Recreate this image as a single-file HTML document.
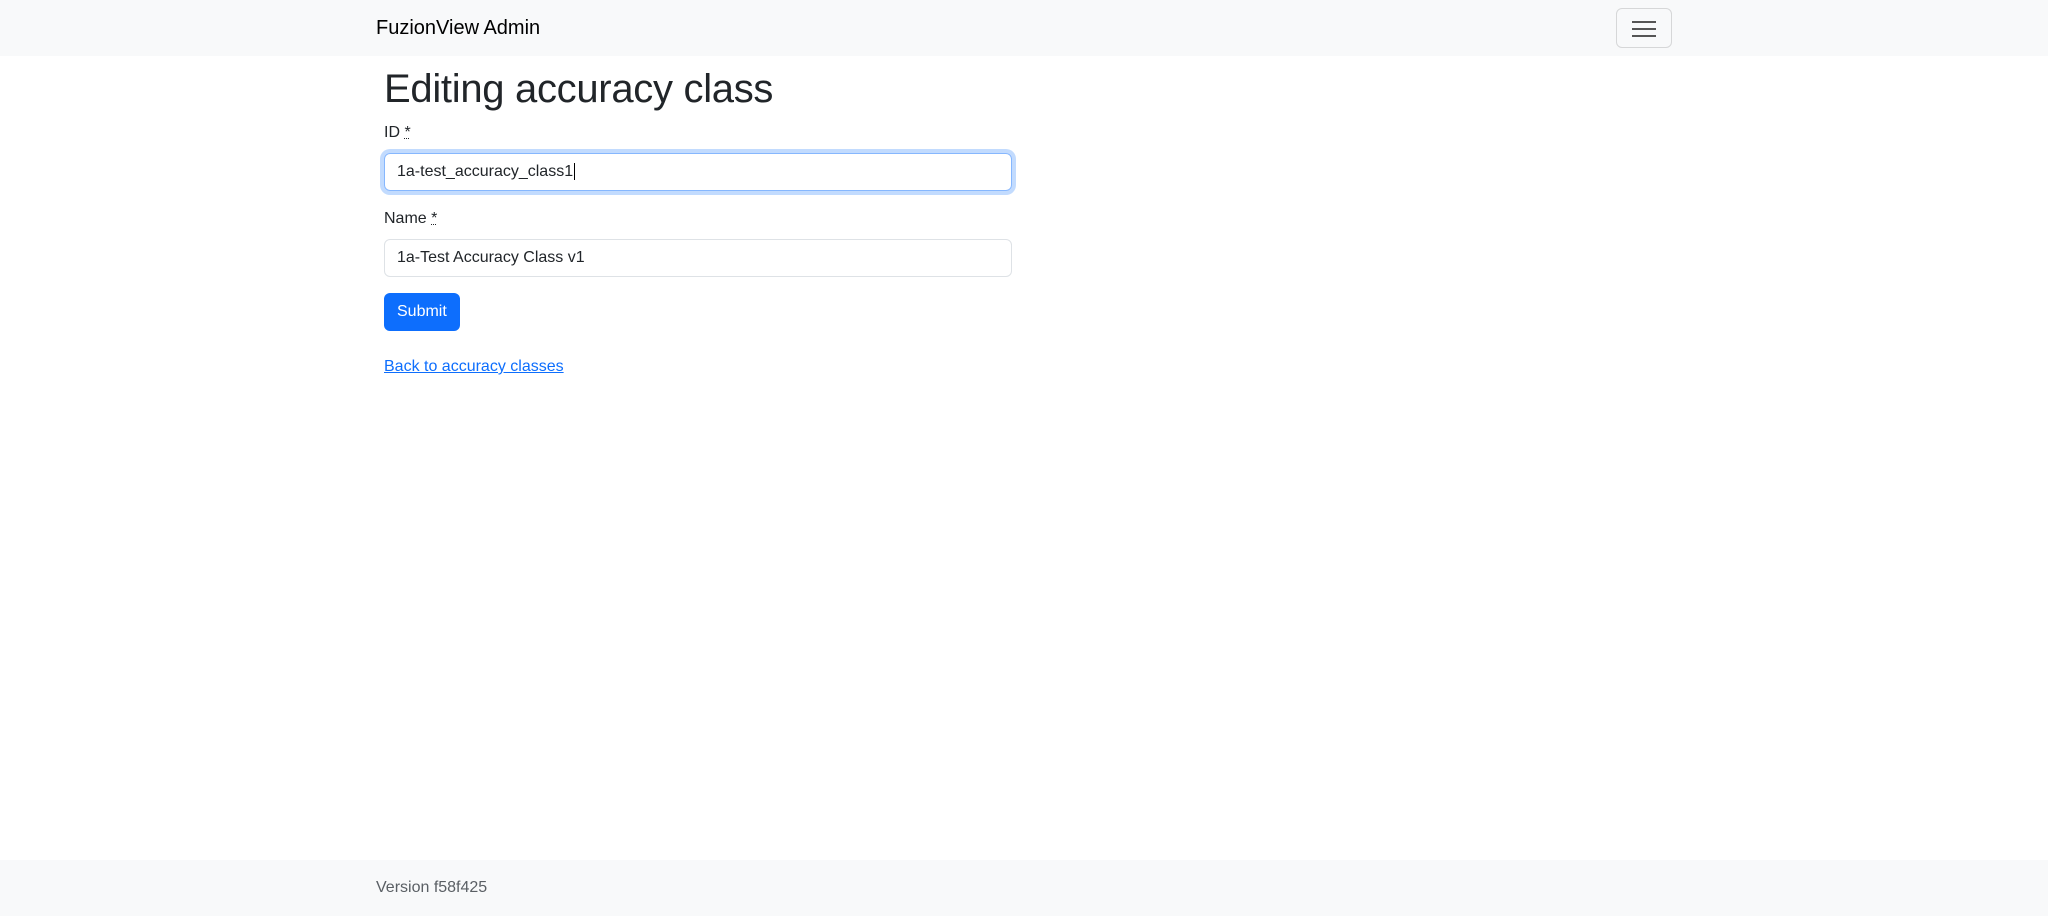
<!DOCTYPE html>
<html><head><meta charset="utf-8"><style>
*{box-sizing:border-box}
body{margin:0;width:2048px;height:916px;font-family:"Liberation Sans",sans-serif;font-size:16px;color:#212529;background:#fff;position:relative;overflow:hidden}
.nav{height:56px;background:#f8f9fa;position:relative}
.brand{position:absolute;left:376px;top:14px;font-size:20px;line-height:28px;color:#000}
.tog{position:absolute;left:1616px;top:8px;width:56px;height:40px;border:1px solid #d6d7d8;border-radius:6px}
.tog i{position:absolute;left:15px;width:24px;height:2px;background:#555}
main{position:absolute;left:384px;top:65px;width:630px}
h1{margin:0 0 8px;font-size:40px;line-height:48px;font-weight:500;letter-spacing:-0.3px}
label{display:block;line-height:24px;margin-bottom:8px}
abbr{text-decoration:underline dotted;text-decoration-thickness:1px}
.in{height:38px;border:1px solid #dee2e6;border-radius:6px;padding:0 12px;line-height:36px;margin-bottom:16px;width:628px}
.f{border-color:#86b7fe;box-shadow:0 0 0 4px rgba(13,110,253,.25)}
.btn{display:inline-block;background:#0d6efd;color:#fff;border-radius:6px;height:38px;line-height:38px;padding:0 13px}
a{color:#0d6efd;display:block;margin-top:24px;line-height:24px;text-decoration:underline}
.foot{position:absolute;left:0;top:860px;width:100%;height:56px;background:#f8f9fa}
.foot span{position:absolute;left:376px;top:16px;line-height:24px;color:#5a5f64}
</style></head><body>
<div class="nav"><div class="brand">FuzionView Admin</div><div class="tog"><i style="top:12px"></i><i style="top:19px"></i><i style="top:26px"></i></div></div>
<main>
<h1>Editing accuracy class</h1>
<label>ID <abbr>*</abbr></label>
<div class="in f">1a-test_accuracy_class1<span style="border-left:1px solid #000;margin-left:1px"></span></div>
<label>Name <abbr>*</abbr></label>
<div class="in">1a-Test Accuracy Class v1</div>
<div class="btn">Submit</div>
<a>Back to accuracy classes</a>
</main>
<div class="foot"><span>Version f58f425</span></div>
</body></html>
